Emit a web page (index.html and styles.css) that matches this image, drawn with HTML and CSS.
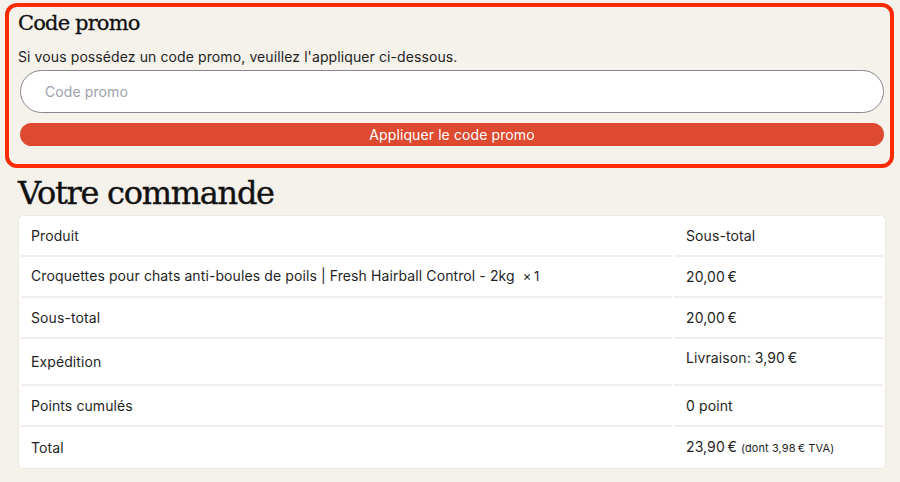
FILE: index.html
```html
<!DOCTYPE html>
<html lang="fr">
<head>
<meta charset="utf-8">
<title>Commande</title>
<link rel="stylesheet" href="styles.css">
</head>
<body>
<section class="promo">
  <h2 class="promo-title">Code promo</h2>
  <p class="promo-text">Si vous possédez un code promo, veuillez l'appliquer ci-dessous.</p>
  <input class="promo-input" type="text" placeholder="Code promo">
  <button class="promo-btn" type="button">Appliquer le code promo</button>
</section>
<h2 class="order-title">Votre commande</h2>
<div class="order-card">
  <table class="order-table">
    <thead>
      <tr><th class="col-name">Produit</th><th class="col-total">Sous-total</th></tr>
    </thead>
    <tbody>
      <tr class="item"><td>Croquettes pour chats anti-boules de poils | Fresh Hairball Control - 2kg&nbsp; <span class="qty">×&thinsp;1</span></td><td>20,00&thinsp;€</td></tr>
      <tr><td>Sous-total</td><td>20,00&thinsp;€</td></tr>
      <tr class="ship"><td>Expédition</td><td class="ship-val">Livraison: 3,90&thinsp;€</td></tr>
      <tr><td>Points cumulés</td><td>0 point</td></tr>
      <tr class="last"><td>Total</td><td>23,90&thinsp;€ <small class="tax">(dont 3,98&thinsp;€ TVA)</small></td></tr>
    </tbody>
  </table>
</div>
</body>
</html>
```
FILE: styles.css
```css
html, body {
  margin: 0;
  padding: 0;
  background: #f5f1eb;
}
body {
  font-family: "Inter", "Noto Sans", sans-serif;
  color: #1f1f1f;
  font-size: 14px;
  letter-spacing: 0.1px;
}
.promo {
  margin: 3px 6px 0 5px;
  border: 4px solid #ff2a00;
  border-radius: 12px;
  padding: 2px 4px 18px 9px;
  display: flex;
  flex-direction: column;
}
.promo-title {
  font-family: "DejaVu Serif", serif;
  font-weight: 400;
  font-size: 21px;
  letter-spacing: -0.04em;
  line-height: 28px;
  margin: 0;
  color: #111;
  -webkit-text-stroke: 0.3px #111;
}
.promo-text {
  margin: 10px 0 0 0;
  line-height: 20px;
  font-size: 14px;
  color: #1f1f1f;
}
.promo-input {
  margin: 3px 2px 0 2px;
  height: 43px;
  box-sizing: border-box;
  border: 1px solid #86868f;
  border-radius: 999px;
  background: #fff;
  padding: 0 24px;
  font-family: "Inter", sans-serif;
  font-size: 14px;
  letter-spacing: 0.1px;
  outline: none;
}
.promo-input::placeholder {
  color: #9da1ae;
}
.promo-btn {
  margin: 10px 2px 0 2px;
  height: 23px;
  border: none;
  border-radius: 999px;
  background: #dd4a2f;
  color: #fff;
  font-family: "Inter", sans-serif;
  font-size: 14px;
  letter-spacing: 0.1px;
  padding: 0;
  line-height: 23px;
}
.order-title {
  font-family: "DejaVu Serif", serif;
  font-weight: 400;
  font-size: 32px;
  letter-spacing: -0.04em;
  line-height: 40px;
  margin: 5px 0 0 18px;
  color: #111;
  -webkit-text-stroke: 0.4px #111;
}
.order-card {
  margin: 2px 14px 0 18px;
  background: #fff;
  border: 1px solid #ebe7e1;
  border-radius: 5px;
}
.order-table {
  width: 100%;
  border-collapse: separate;
  border-spacing: 2px 0;
}
.order-table th,
.order-table td {
  text-align: left;
  font-weight: 400;
  padding: 9px 10px;
  line-height: 21px;
  border-bottom: 2px solid #f2efea;
  vertical-align: middle;
}
.order-table .col-total {
  width: 187px;
  padding-left: 12px;
}
.order-table td + td {
  padding-left: 12px;
}
.order-table .item td {
  padding-top: 8px;
}
.order-table .ship td {
  padding-top: 12px;
  padding-bottom: 12px;
}
.order-table .ship .ship-val {
  vertical-align: top;
  padding-top: 8px;
  padding-bottom: 16px;
}
.order-table .last td {
  border-bottom: none;
}
.qty {
  font-size: 13px;
}
.tax {
  font-size: 11px;
}
```
